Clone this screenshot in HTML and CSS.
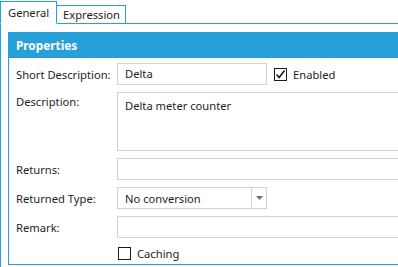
FILE: index.html
```html
<!DOCTYPE html>
<html lang="en">
<head>
    <meta charset="UTF-8">
    <title>Properties</title>
    <link rel="stylesheet" href="styles.css">
</head>
<body>
    <div class="tabs">
        <div class="tab selected">General</div>
        <div class="tab">Expression</div>
        <div class="tab-fill"></div>
    </div>
    <div class="tab-content">
        <div class="group">
            <div class="group-header">Properties</div>
            <div class="form">
                <label class="label">Short Description:</label>
                <div class="field-row">
                    <div class="input short">Delta</div>
                    <div class="check">
                        <span class="box">
                            <svg width="11" height="11" viewBox="0 0 11 11">
                                <path d="M1.5 5.5 L4.2 8.5 L9.5 1.5" fill="none" stroke="#1a1a1a" stroke-width="1.6"/>
                            </svg>
                        </span>
                        <span>Enabled</span>
                    </div>
                </div>

                <label class="label top">Description:</label>
                <div class="input wide area">Delta meter counter</div>

                <label class="label">Returns:</label>
                <div class="input wide"></div>

                <label class="label">Returned Type:</label>
                <div class="combo">
                    <div class="combo-text">No conversion</div>
                    <div class="combo-button">
                        <svg width="7" height="4" viewBox="0 0 7 4"><path d="M0 0 H7 L3.5 4 Z" fill="#6d6d6d"/></svg>
                    </div>
                </div>

                <label class="label">Remark:</label>
                <div class="input wide"></div>

                <span></span>
                <div class="check caching">
                    <span class="box"></span>
                    <span>Caching</span>
                </div>
            </div>
        </div>
    </div>
</body>
</html>
```

FILE: styles.css
```css
* {
    box-sizing: border-box;
    margin: 0;
    padding: 0;
}

body {
    font-family: 'Noto Sans', 'Open Sans', sans-serif;
    font-size: 11.2px;
    color: #1e1e1e;
    background: #fff;
    width: 398px;
    height: 267px;
    overflow: hidden;
}

.tabs {
    display: flex;
    align-items: flex-end;
    height: 24px;
    padding-top: 1px;
}

.tab {
    height: 19px;
    padding: 0 5px 0 6px;
    line-height: 17px;
    border: 1px solid #27a0da;
    border-left: none;
    white-space: nowrap;
}

.tab.selected {
    height: 23px;
    width: 57px;
    padding: 2px 0 0 7px;
    border-left: 1px solid #27a0da;
    border-bottom: 1px solid #fff;
    line-height: 18px;
}

.tab-fill {
    flex: 1;
    border-bottom: 1px solid #27a0da;
}

.tab-content {
    border-left: 1px solid #27a0da;
    padding: 8px 0 0 7px;
    height: 243px;
}

.group {
    border: 1px solid #27a0da;
    border-right: none;
    height: 233px;
}

.group-header {
    background: #27a0da;
    color: #fff;
    font-weight: bold;
    font-size: 11.8px;
    height: 25px;
    line-height: 24px;
    padding-left: 7px;
}

.form {
    display: grid;
    grid-template-columns: 101px 1fr;
    row-gap: 7px;
    padding: 5px 0 0 7px;
}

.label {
    display: flex;
    align-items: center;
    white-space: nowrap;
    padding-top: 1px;
}

.label.top {
    align-items: flex-start;
    padding-top: 2px;
}

.input {
    height: 22px;
    border: 1px solid #d3d3d3;
    padding: 0 7px;
    line-height: 20px;
}

.input.wide {
    border-right: none;
}

.input.area {
    height: 59px;
    padding-top: 3px;
    line-height: 19px;
}

.field-row {
    display: flex;
    align-items: center;
    gap: 7px;
}

.input.short {
    width: 150px;
}

.check {
    display: flex;
    align-items: center;
    gap: 6px;
}

.box {
    width: 13px;
    height: 13px;
    border: 1px solid #1a1a1a;
    display: flex;
    align-items: center;
    justify-content: center;
}

.caching {
    height: 16px;
    padding-left: 1px;
}

.combo {
    display: flex;
    width: 150px;
    height: 22px;
    border: 1px solid #d3d3d3;
}

.combo-text {
    flex: 1;
    padding-left: 7px;
    line-height: 21px;
}

.combo-button {
    width: 15px;
    border-left: 1px solid #d3d3d3;
    display: flex;
    align-items: center;
    justify-content: center;
}
```
